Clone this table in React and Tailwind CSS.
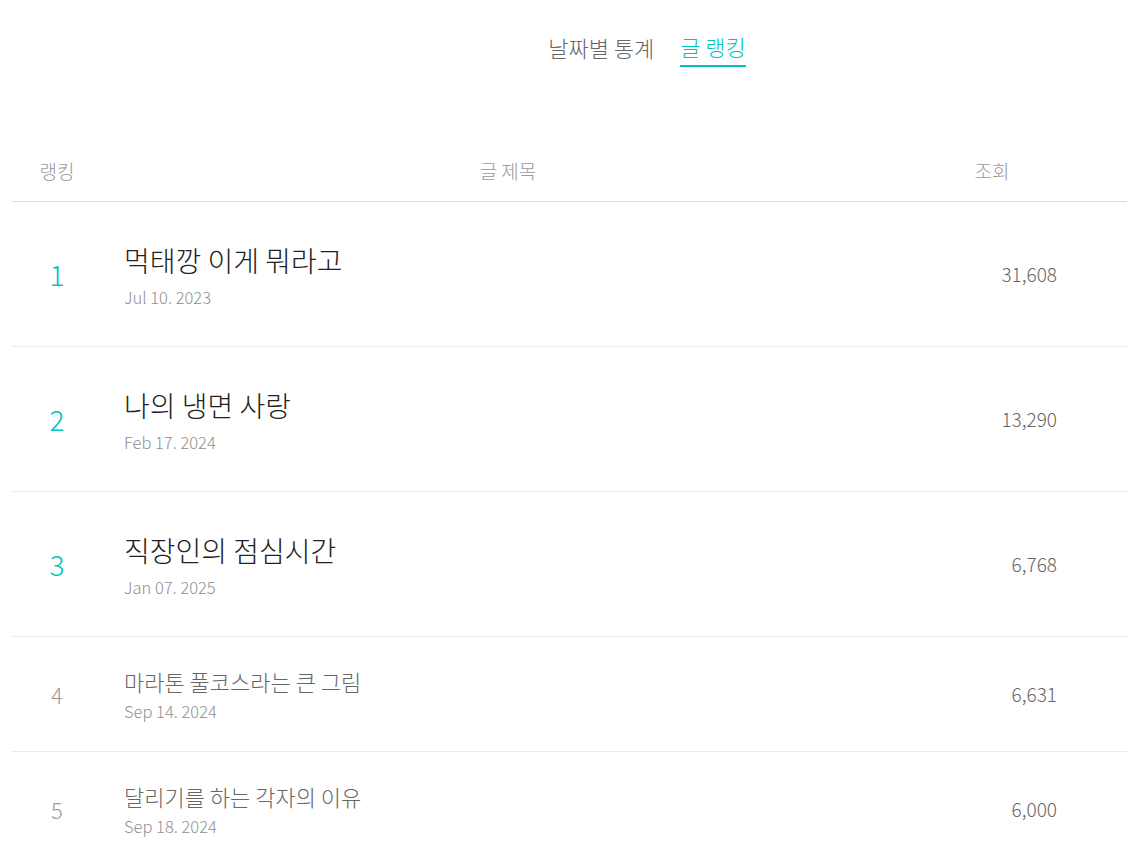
import React from 'react';

const posts = [
  { rank: 1, title: '먹태깡 이게 뭐라고', date: 'Jul 10. 2023', views: '31,608' },
  { rank: 2, title: '나의 냉면 사랑', date: 'Feb 17. 2024', views: '13,290' },
  { rank: 3, title: '직장인의 점심시간', date: 'Jan 07. 2025', views: '6,768' },
  { rank: 4, title: '마라톤 풀코스라는 큰 그림', date: 'Sep 14. 2024', views: '6,631' },
  { rank: 5, title: '달리기를 하는 각자의 이유', date: 'Sep 18. 2024', views: '6,000' },
];

export default function App() {
  return (
    <div
      className="min-h-screen bg-white overflow-hidden"
      style={{ fontFamily: '"Noto Sans CJK KR", "Noto Sans", sans-serif' }}
    >
      <div className="ml-3 w-[1270px]">
        {/* tabs */}
        <nav className="flex justify-center gap-[26px] pt-[29px]">
          <button className="text-[22px] leading-[34px] font-light text-[#666] pb-[3px]">
            날짜별 통계
          </button>
          <button className="text-[22px] leading-[34px] font-light text-[#00c3bd] border-b-2 border-[#00c3bd] pb-[2px]">
            글 랭킹
          </button>
        </nav>

        {/* table */}
        <div className="mt-[74px] w-[1115px]">
          <div className="flex items-center h-[61px] border-b border-[#ddd] text-[19px] font-light text-[#999]">
            <div className="w-[90px] text-center">랭킹</div>
            <div className="w-[768px] ml-[22px] text-center">글 제목</div>
            <div className="w-[200px] text-center">조회</div>
          </div>

          {posts.map((p) => {
            const top = p.rank <= 3;
            return (
              <div
                key={p.rank}
                className={`flex items-center border-b border-[#ebebeb] ${top ? 'h-[145px]' : 'h-[115px]'}`}
              >
                <div
                  className={`w-[90px] text-center font-light ${top ? 'text-[28px] text-[#00c3bd]' : 'text-[22px] text-[#999]'}`}
                >
                  {p.rank}
                </div>
                <div className="w-[768px] ml-[22px] flex flex-col">
                  <div
                    className={`font-light ${top ? 'text-[28px] leading-[40px] text-[#222]' : 'text-[22px] leading-[32px] text-[#666]'}`}
                  >
                    {p.title}
                  </div>
                  <div
                    className={`text-[16.5px] leading-[24px] font-light text-[#8f8f8f] ${top ? 'mt-[5px]' : 'mt-[2px]'}`}
                  >
                    {p.date}
                  </div>
                </div>
                <div className="w-[165px] text-right text-[19px] font-light text-[#666]">{p.views}</div>
              </div>
            );
          })}
        </div>
      </div>
    </div>
  );
}
